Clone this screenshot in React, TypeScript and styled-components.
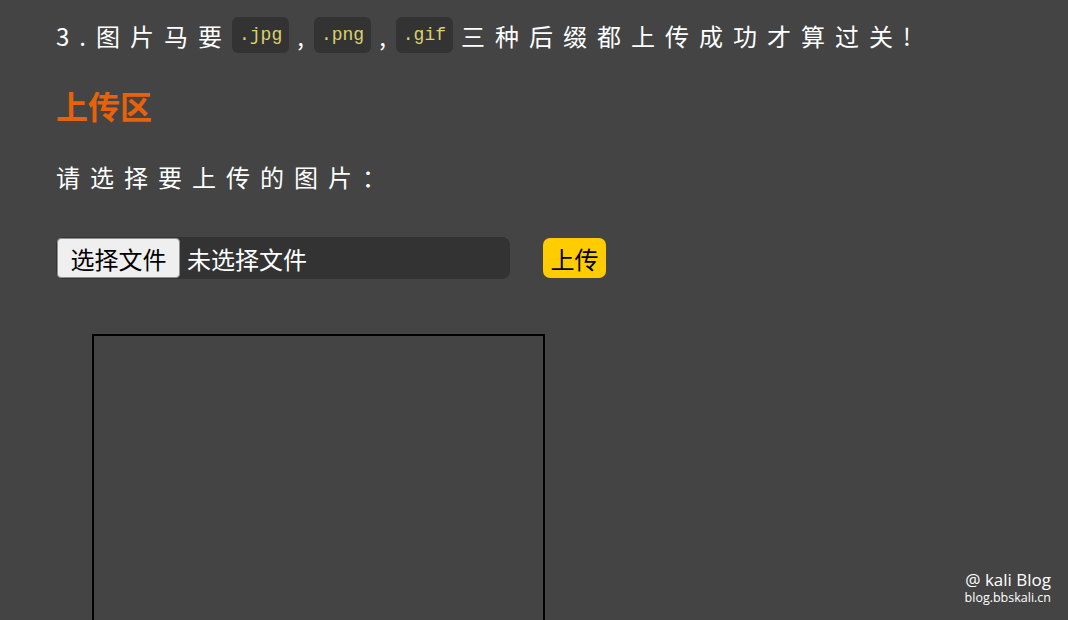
import styled, { createGlobalStyle } from 'styled-components';

const GlobalStyle = createGlobalStyle`
  html, body {
    margin: 0;
    padding: 0;
    background: #444444;
  }
  body {
    font-family: "Noto Sans CJK SC", "Liberation Sans", sans-serif;
    color: #ffffff;
    overflow: hidden;
  }
`;

const App = () => {
  return (
    <Page>
      <GlobalStyle />
      <Rule>
        3.图片马要<Code>.jpg</Code>,<Code>.png</Code>,<Code>.gif</Code>三种后缀都上传成功才算过关!
      </Rule>
      <Title>上传区</Title>
      <Hint>请选择要上传的图片：</Hint>
      {/* 文件选择 + 上传按钮 */}
      <UploadRow>
        <FileInput>
          <FileButton>选择文件</FileButton>
          <FileName>未选择文件</FileName>
        </FileInput>
        <SubmitButton>上传</SubmitButton>
      </UploadRow>
      <Preview />
      <Watermark>
        <WatermarkTitle>@ kali Blog</WatermarkTitle>
        <WatermarkUrl>blog.bbskali.cn</WatermarkUrl>
      </Watermark>
    </Page>
  );
};

export default App;

const Page = styled.div`
  position: relative;
  width: 1068px;
  height: 620px;
  padding: 17px 0 0 56px;
  box-sizing: border-box;
  overflow: hidden;
`;

const Rule = styled.p`
  margin: 0;
  display: flex;
  align-items: center;
  height: 36px;
  font-size: 24px;
  letter-spacing: 10px;
  white-space: nowrap;
`;

const Code = styled.code`
  display: inline-flex;
  align-items: center;
  height: 36px;
  padding: 0 7px;
  margin-right: 8px;
  background: #333333;
  border-radius: 6px;
  font-family: "Liberation Mono", "DejaVu Sans Mono", monospace;
  font-size: 18px;
  letter-spacing: 0;
  color: #ddd26a;
`;

const Title = styled.h2`
  margin: 36px 0 0;
  height: 32px;
  line-height: 32px;
  font-size: 32px;
  font-weight: 700;
  color: #e8620a;
`;

const Hint = styled.p`
  margin: 38px 0 0;
  height: 36px;
  line-height: 36px;
  font-size: 24px;
  letter-spacing: 10px;
`;

const UploadRow = styled.div`
  display: flex;
  align-items: center;
  gap: 33px;
  margin-top: 42px;
`;

const FileInput = styled.div`
  display: flex;
  align-items: center;
  width: 454px;
  height: 42px;
  padding: 1px;
  box-sizing: border-box;
  background: #333333;
  border-radius: 8px;
`;

const FileButton = styled.div`
  display: flex;
  align-items: center;
  justify-content: center;
  width: 123px;
  height: 40px;
  box-sizing: border-box;
  background: #efefef;
  border: 1px solid #8f8f8f;
  border-radius: 4px;
  font-size: 24px;
  color: #000000;
`;

const FileName = styled.span`
  margin-left: 7px;
  font-size: 24px;
  color: #ffffff;
`;

const SubmitButton = styled.div`
  display: flex;
  align-items: center;
  justify-content: center;
  width: 63px;
  height: 40px;
  background: #ffcc00;
  border-radius: 7px;
  font-size: 24px;
  color: #000000;
`;

const Preview = styled.div`
  margin: 55px 0 0 36px;
  width: 453px;
  height: 320px;
  box-sizing: border-box;
  border: 2px solid #000000;
`;

const Watermark = styled.div`
  position: absolute;
  right: 17px;
  bottom: 14px;
  display: flex;
  flex-direction: column;
  align-items: flex-end;
  font-family: "Open Sans", "Liberation Sans", sans-serif;
  color: #ffffff;
`;

const WatermarkTitle = styled.span`
  font-size: 17px;
  line-height: 21px;
`;

const WatermarkUrl = styled.span`
  font-size: 12.5px;
  line-height: 16px;
`;
